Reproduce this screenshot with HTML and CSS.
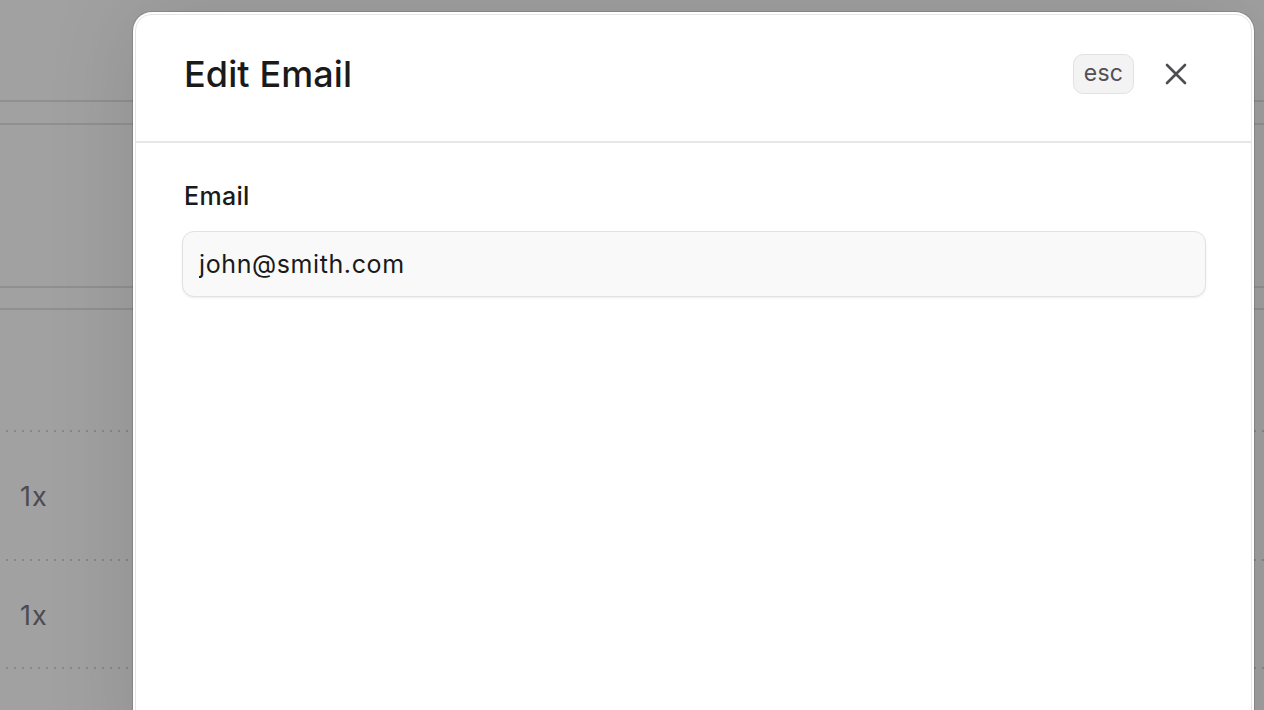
FILE: index.html
```html
<!DOCTYPE html>
<html lang="en">
<head>
<meta charset="utf-8">
<title>Edit Email</title>
<link rel="stylesheet" href="styles.css">
</head>
<body>
<div class="page">
  <div class="band band-top"></div>
  <div class="band band-mid"></div>
  <div class="rows">
    <div class="row row-a"><span class="qty">1x</span></div>
    <div class="row row-b"><span class="qty">1x</span></div>
  </div>
</div>
<div class="overlay"></div>
<div class="modal">
  <div class="modal-inner">
    <header class="modal-header">
      <h2 class="modal-title">Edit Email</h2>
      <div class="modal-actions">
        <kbd class="kbd">esc</kbd>
        <button class="close" type="button" aria-label="Close">
          <svg width="22" height="22" viewBox="0 0 22 22" fill="none" stroke="currentColor" stroke-width="2.6" stroke-linecap="round">
            <path d="M2 2 L20 20 M20 2 L2 20"/>
          </svg>
        </button>
      </div>
    </header>
    <div class="modal-body">
      <label class="field-label" for="email">Email</label>
      <input class="field-input" id="email" type="text" value="john@smith.com">
    </div>
  </div>
</div>
</body>
</html>
```

FILE: styles.css
```css
* { box-sizing: border-box; }
html, body { margin: 0; padding: 0; }
body {
  width: 1264px;
  height: 710px;
  overflow: hidden;
  background: #ffffff;
  font-family: Inter, "Noto Sans", sans-serif;
  position: relative;
}
.page {
  padding-top: 100px;
}
.band {
  height: 25px;
  border-top: 2px solid #e4e4e4;
  border-bottom: 2px solid #e4e4e4;
}
.band-mid {
  margin-top: 161px;
  height: 24px;
}
.rows {
  margin-top: 120px;
  padding-left: 6px;
}
.row {
  display: flex;
  align-items: center;
  padding-left: 14px;
  background-image: linear-gradient(to right, #d6d6d6 2px, transparent 2px);
  background-size: 8px 2px;
  background-repeat: repeat-x;
  background-position: 0 0;
}
.row-a { height: 129px; }
.row-b { height: 108px; position: relative; }
.row-b::after {
  content: "";
  position: absolute;
  left: 0; right: 0; bottom: -2px;
  height: 2px;
  background-image: linear-gradient(to right, #d6d6d6 2px, transparent 2px);
  background-size: 8px 2px;
}
.qty {
  font-size: 27px;
  color: #787880;
  letter-spacing: 1px;
  margin-top: 4px;
}
.overlay {
  position: absolute;
  inset: 0;
  background: rgba(0, 0, 0, 0.37);
}
.modal {
  position: absolute;
  left: 133px;
  top: 12px;
  width: 1121px;
  height: 760px;
  background: #ffffff;
  border-radius: 19px;
  padding: 2px;
  box-shadow: 0 0 0 1px rgba(0, 0, 0, 0.12), 0 0 90px rgba(0, 0, 0, 0.12);
}
.modal-inner {
  height: 100%;
  border: 1px solid #e6e6e6;
  border-radius: 16px;
  background: #ffffff;
}
.modal-header {
  height: 128px;
  display: flex;
  align-items: center;
  justify-content: space-between;
  padding: 0 57px 8px 48px;
  border-bottom: 2px solid #e6e6e6;
}
.modal-title {
  margin: 0;
  font-size: 36px;
  font-weight: 500;
  color: #1a1a1a;
  letter-spacing: 0.1px;
}
.modal-actions {
  display: flex;
  align-items: center;
  gap: 25px;
}
.kbd {
  font-family: Inter, "Noto Sans", sans-serif;
  font-size: 23px;
  color: #505055;
  background: #f3f3f3;
  border: 1.5px solid #e2e2e2;
  border-radius: 10px;
  height: 40px;
  width: 61px;
  display: flex;
  align-items: center;
  justify-content: center;
  padding-bottom: 2px;
  letter-spacing: 0.3px;
}
.close {
  width: 36px;
  height: 36px;
  padding: 0;
  margin-left: -1px;
  border: 0;
  background: transparent;
  color: #4d4d52;
  display: flex;
  align-items: center;
  justify-content: center;
}
.modal-body {
  padding: 38px 45px 0 46px;
  display: flex;
  flex-direction: column;
}
.field-label {
  font-size: 25px;
  font-weight: 500;
  color: #1a1a1a;
  margin-left: 2px;
  margin-bottom: 20px;
  letter-spacing: 0.3px;
}
.field-input {
  height: 66px;
  width: 100%;
  border: 1.5px solid #e2e2e2;
  border-radius: 12px;
  background: #f9f9f9;
  box-shadow: 0 1px 2px rgba(0, 0, 0, 0.08);
  padding: 0 16px;
  font-family: Inter, "Noto Sans", sans-serif;
  font-size: 25px;
  letter-spacing: 0.6px;
  color: #1a1a1a;
  outline: none;
}
```
